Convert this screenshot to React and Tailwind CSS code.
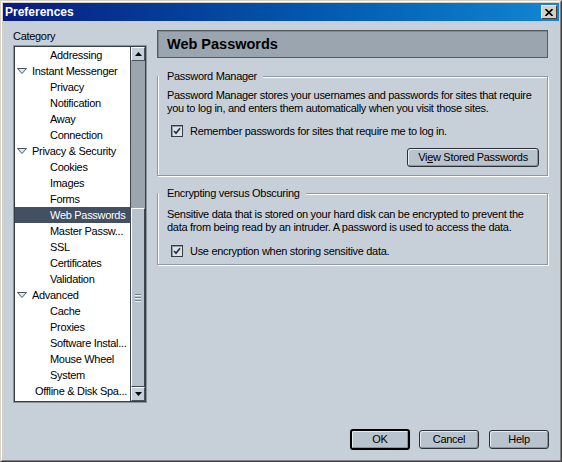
import React from "react";

const rows = [
  { t: "Addressing", k: "c" },
  { t: "Instant Messenger", k: "p" },
  { t: "Privacy", k: "c" },
  { t: "Notification", k: "c" },
  { t: "Away", k: "c" },
  { t: "Connection", k: "c" },
  { t: "Privacy & Security", k: "p" },
  { t: "Cookies", k: "c" },
  { t: "Images", k: "c" },
  { t: "Forms", k: "c" },
  { t: "Web Passwords", k: "c", sel: true },
  { t: "Master Passw...", k: "c" },
  { t: "SSL", k: "c" },
  { t: "Certificates", k: "c" },
  { t: "Validation", k: "c" },
  { t: "Advanced", k: "p" },
  { t: "Cache", k: "c" },
  { t: "Proxies", k: "c" },
  { t: "Software Instal...", k: "c" },
  { t: "Mouse Wheel", k: "c" },
  { t: "System", k: "c" },
  { t: "Offline & Disk Spa...", k: "l" },
];

function Twisty() {
  return (
    <svg width="10" height="6" viewBox="0 0 10 6" className="shrink-0 -mt-px">
      <polygon points="0.5,0.5 9.5,0.5 5,5.5" fill="#e4e9ee" stroke="#47525d" strokeWidth="1" />
    </svg>
  );
}

function Row({ r }) {
  const base = "h-[16px] flex items-center whitespace-nowrap";
  const color = r.sel ? " bg-[#434f63] text-white" : "";
  if (r.k === "p") {
    return (
      <div className={base + color + " pl-[2px]"}>
        <Twisty />
        <span className="ml-[5px]">{r.t}</span>
      </div>
    );
  }
  if (r.k === "l") {
    return <div className={base + color + " pl-[20px]"}>{r.t}</div>;
  }
  return <div className={base + color + " pl-[35px]"}>{r.t}</div>;
}

function ScrollBtn({ up }) {
  return (
    <div className="h-[14px] shrink-0 bg-[#c7d0d9] border border-t-white border-l-white border-r-[#4a535c] border-b-[#4a535c] flex items-center justify-center">
      <svg width="7" height="4" viewBox="0 0 7 4">
        {up ? <polygon points="0,4 7,4 3.5,0" fill="#000" /> : <polygon points="0,0 7,0 3.5,4" fill="#000" />}
      </svg>
    </div>
  );
}

function Scrollbar() {
  return (
    <div className="w-[15px] shrink-0 flex flex-col border-l border-[#3e4650] bg-[#9ca5ae]">
      <ScrollBtn up />
      <div className="h-[147px] shrink-0 bg-[#9ca5ae]" />
      <div className="h-[179px] shrink-0 bg-[#b9c3cd] border border-t-white border-l-white border-r-[#3e4650] border-b-[#3e4650] flex flex-col items-center justify-center gap-px">
        <div className="w-[6px] border-t border-t-[#76808a] border-b border-b-[#e8edf2]" />
        <div className="w-[6px] border-t border-t-[#76808a] border-b border-b-[#e8edf2]" />
        <div className="w-[6px] border-t border-t-[#76808a] border-b border-b-[#e8edf2]" />
      </div>
      <ScrollBtn />
    </div>
  );
}

function Check() {
  return (
    <div className="w-[12px] h-[12px] shrink-0 border border-[#353d45] bg-[#dde3e9] shadow-[inset_1px_1px_0_#8f99a3] flex items-center justify-center">
      <svg width="8" height="8" viewBox="0 0 8 8">
        <path d="M1 4 L3 6.2 L7 1.2" fill="none" stroke="#26303a" strokeWidth="1.7" />
      </svg>
    </div>
  );
}

function Group({ label, className, children }) {
  return (
    <div className={"border-l border-r border-b border-[#8e98a2] shadow-[inset_1px_0_0_#fff,1px_1px_0_#fff] " + className}>
      <div className="-mt-[6px] h-[13px] flex items-center">
        <span className="pl-[9px] pr-[6px]">{label}</span>
        <div className="flex-1 border-t border-t-[#8e98a2] border-b border-b-white" />
      </div>
      {children}
    </div>
  );
}

const btn =
  "rounded-[3px] bg-[#b9c3cd] shadow-[inset_1px_1px_0_#e6ebf0,inset_-1px_-1px_0_#8a949e] flex items-center justify-center";

export default function App() {
  return (
    <div className="w-[562px] h-[462px] flex flex-col border border-t-[#d4d0c8] border-l-[#d4d0c8] border-r-[#404040] border-b-[#404040] font-['Liberation_Sans',Arial,sans-serif] text-black">
      <div className="flex-1 flex flex-col border border-t-white border-l-white border-r-[#808080] border-b-[#808080] bg-[#d4d0c8] p-px">
        <div className="h-[18px] shrink-0 flex items-center justify-between bg-linear-to-r from-[#0a1a80] to-[#1286d2] px-[2px]">
          <span className="text-white font-bold text-[12px] leading-none">Preferences</span>
          <div className="w-[16px] h-[14px] bg-[#d4d0c8] border border-t-white border-l-white border-r-[#404040] border-b-[#404040] flex items-center justify-center">
            <svg width="8" height="7" viewBox="0 0 8 7">
              <path d="M0.5 0 L7.5 7 M7.5 0 L0.5 7" stroke="#000" strokeWidth="1.6" />
            </svg>
          </div>
        </div>
        <div className="flex-1 flex flex-col bg-[#c7d0d9] text-[11px] tracking-[-0.3px] leading-[13px]">
          <div className="flex pl-[10px] pt-[9px]">
            <div className="w-[134px] flex flex-col">
              <div className="h-[13px]">Category</div>
              <div className="mt-[2px] h-[358px] border border-[#8a949e]">
                <div className="h-full border border-[#353d45] bg-white flex">
                  <div className="flex-1 flex flex-col">
                    {rows.map((r) => (
                      <Row key={r.t} r={r} />
                    ))}
                  </div>
                  <Scrollbar />
                </div>
              </div>
            </div>
            <div className="ml-[10px] w-[391px] flex flex-col">
              <div className="h-[28px] border border-[#505b66] bg-[#9aa5b0] shadow-[inset_1px_1px_0_#7d8893] flex items-center pl-[9px] text-[14.5px] font-bold tracking-normal">
                Web Passwords
              </div>
              <Group label="Password Manager" className="mt-[18px]">
                <p className="mt-[6px] pl-[9px] whitespace-nowrap">
                  Password Manager stores your usernames and passwords for sites that require
                  <br />
                  you to log in, and enters them automatically when you visit those sites.
                </p>
                <div className="mt-[9px] h-[14px] flex items-center pl-[13px]">
                  <Check />
                  <span className="ml-[7px]">Remember passwords for sites that require me to log in.</span>
                </div>
                <div className="mt-[10px] flex justify-end pr-[8px] pb-[8px]">
                  <div className={btn + " w-[132px] h-[19px] border border-[#2b3137]"}>
                    <span>
                      Vi<span className="underline">e</span>w Stored Passwords
                    </span>
                  </div>
                </div>
              </Group>
              <Group label="Encrypting versus Obscuring" className="mt-[17px]">
                <p className="mt-[8px] pl-[9px] whitespace-nowrap">
                  Sensitive data that is stored on your hard disk can be encrypted to prevent the
                  <br />
                  data from being read by an intruder. A password is used to access the data.
                </p>
                <div className="mt-[10px] h-[14px] flex items-center pl-[13px] pb-0">
                  <Check />
                  <span className="ml-[7px]">Use encryption when storing sensitive data.</span>
                </div>
                <div className="h-[6px]" />
              </Group>
            </div>
          </div>
          <div className="mt-auto flex justify-end items-center pr-[10px] pb-[9px]">
            <div className={btn + " w-[60px] h-[21px] border-2 border-black"}>OK</div>
            <div className={btn + " ml-[9px] w-[60px] h-[19px] border border-[#2b3137]"}>Cancel</div>
            <div className={btn + " ml-[10px] w-[60px] h-[19px] border border-[#2b3137]"}>Help</div>
          </div>
        </div>
      </div>
    </div>
  );
}
